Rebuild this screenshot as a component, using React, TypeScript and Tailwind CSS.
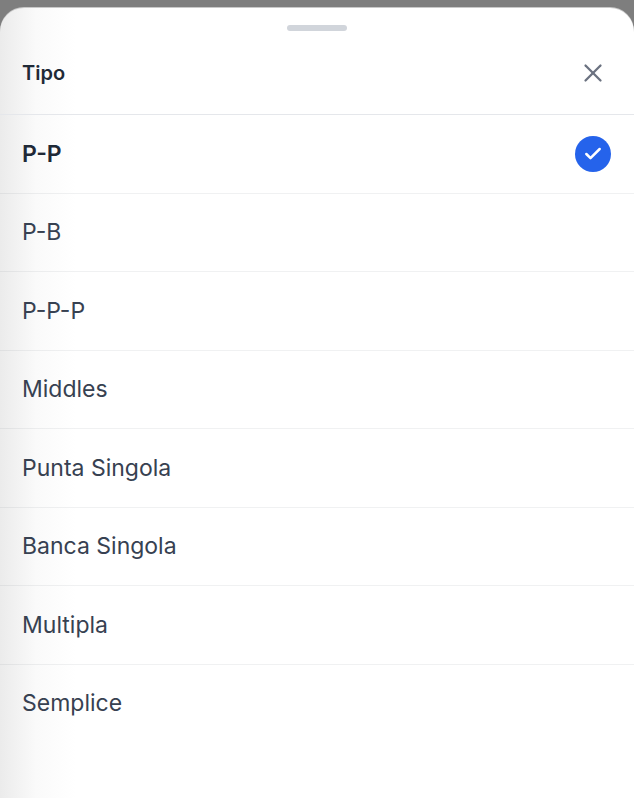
import { useState } from 'react'
import { Check, X } from 'lucide-react'

const OPTIONS = ['P-P', 'P-B', 'P-P-P', 'Middles', 'Punta Singola', 'Banca Singola', 'Multipla', 'Semplice']

export default function App() {
  const [selected, setSelected] = useState('P-P')

  return (
    <div className="min-h-screen flex flex-col bg-[#7e7e7e] pt-2 font-['Inter','Liberation_Sans',sans-serif]">
      <section
        role="dialog"
        aria-labelledby="sheet-title"
        className="flex-1 flex flex-col rounded-t-3xl bg-white bg-linear-to-r from-[#ebebeb] via-[#fafafa] via-[36px] to-white to-[76px] shadow-[0_-1px_0_#c8c8c8]"
      >
        {/* Drag handle */}
        <div className="flex justify-center pt-[17px]">
          <span className="w-15 h-1.5 rounded-full bg-[#d1d5db]" />
        </div>

        <header className="flex items-center justify-between pl-[22px] pr-[23px] h-[84px] border-b border-[#e5e7eb]">
          <h2 id="sheet-title" className="text-[20px] font-semibold text-[#1f2937]">Tipo</h2>
          <button type="button" aria-label="Chiudi" className="w-9 h-9 flex items-center justify-center text-[#6b7280]">
            <X size={30} strokeWidth={1.8} />
          </button>
        </header>

        {/* Options */}
        <ul className="flex-1 flex flex-col pb-[55px]">
          {OPTIONS.map(option => (
            <li key={option} className="flex-1 flex border-b border-gray-500/10 last:border-transparent">
              <button
                type="button"
                aria-pressed={option === selected}
                onClick={() => setSelected(option)}
                className={`flex-1 flex items-center justify-between pl-[22px] pr-[23px] py-5 text-left text-[23px] leading-9 ${
                  option === selected ? 'font-semibold text-[#1f2937]' : 'text-[#374151]'
                }`}
              >
                {option}
                {option === selected && (
                  <span className="w-9 h-9 rounded-full bg-[#2563eb] flex items-center justify-center text-white">
                    <Check size={20} strokeWidth={3} />
                  </span>
                )}
              </button>
            </li>
          ))}
        </ul>
      </section>
    </div>
  )
}
